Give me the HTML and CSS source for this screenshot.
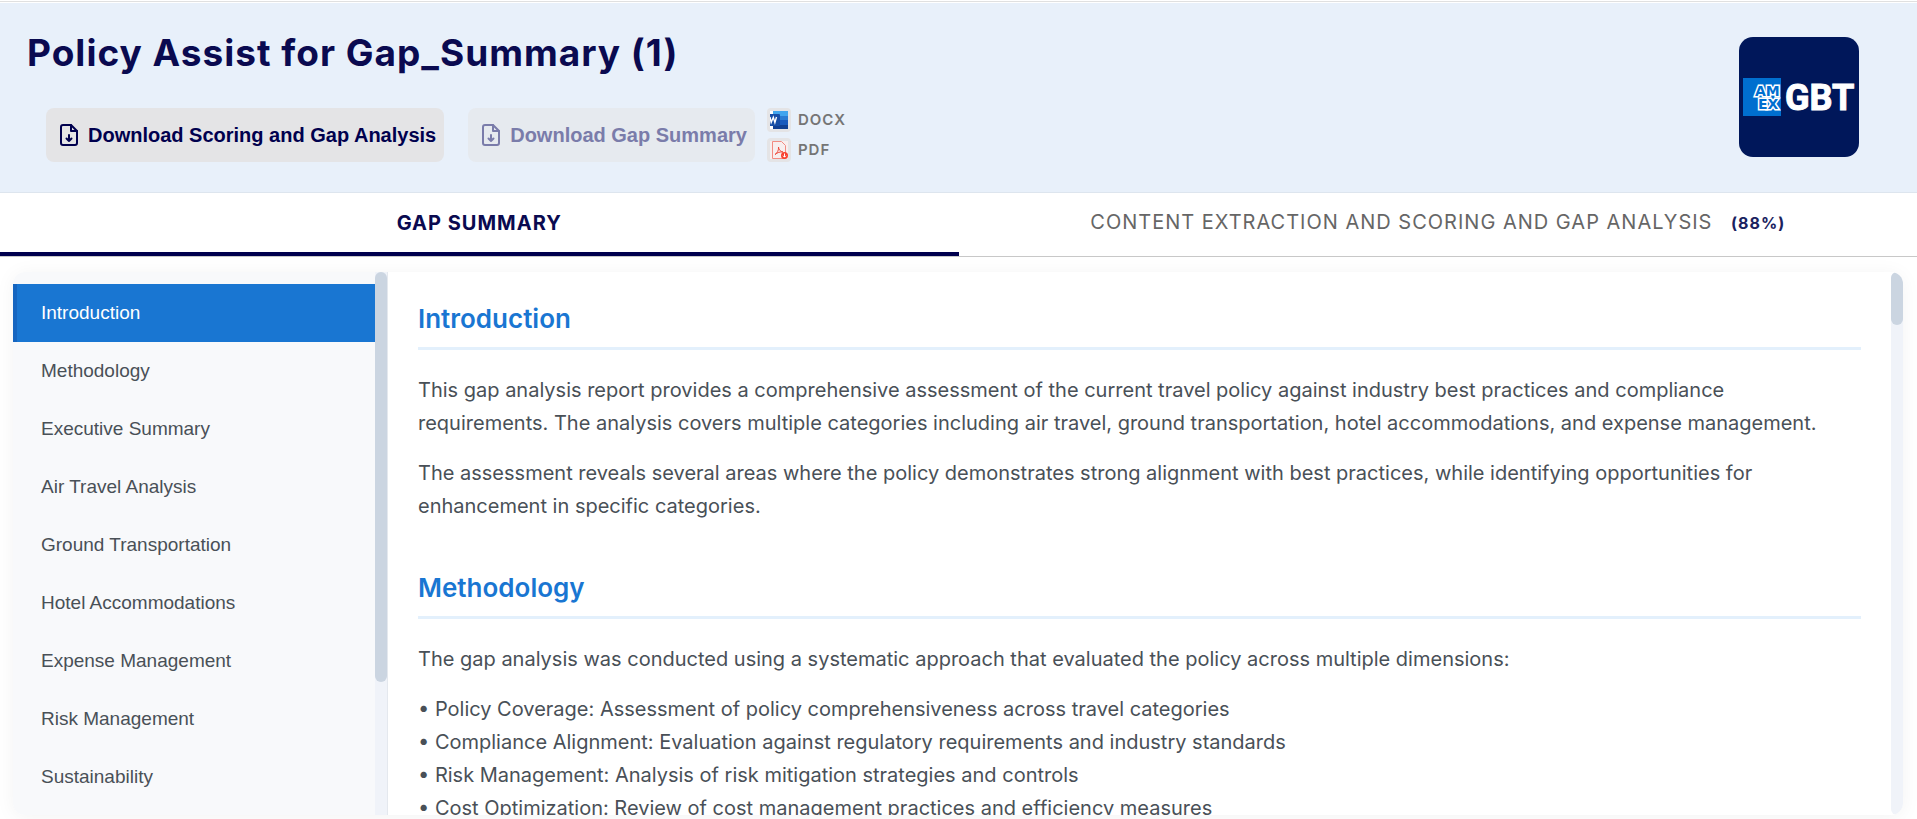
FILE: index.html
```
<!DOCTYPE html>
<html lang="en">
<head>
<meta charset="utf-8">
<meta name="viewport" content="width=device-width, initial-scale=1">
<title>Policy Assist</title>
<link rel="stylesheet" href="styles.css">
</head>
<body>
<header class="header">
  <div class="header-main">
    <h1 class="title">Policy Assist for Gap_Summary (1)</h1>
    <div class="actions">
      <button class="download" type="button">
        <svg class="file-icon" viewBox="0 0 18 22" fill="none" stroke="currentColor" stroke-width="2" stroke-linejoin="round" stroke-linecap="round"><path d="M11 1H3a2 2 0 0 0-2 2v16a2 2 0 0 0 2 2h12a2 2 0 0 0 2-2V7z"/><path d="M11 1v6h6M9 11v6M6.500 14.500 9 17l2.500-2.500"/></svg>
        Download Scoring and Gap Analysis
      </button>
      <button class="download" type="button" disabled>
        <svg class="file-icon" viewBox="0 0 18 22" fill="none" stroke="currentColor" stroke-width="2" stroke-linejoin="round" stroke-linecap="round"><path d="M11 1H3a2 2 0 0 0-2 2v16a2 2 0 0 0 2 2h12a2 2 0 0 0 2-2V7z"/><path d="M11 1v6h6M9 11v6M6.500 14.500 9 17l2.500-2.500"/></svg>
        Download Gap Summary
      </button>
      <div class="formats">
        <button class="format" type="button">
          <span class="format-icon"><svg viewBox="0 0 18 18"><path fill="#fff" d="M0 0h4v18H0z"/><path fill="#41a5ee" d="M3 0h15v5H3z"/><path fill="#2b7cd3" d="M3 5h15v4H3z"/><path fill="#185abd" d="M3 9h15v5H3z"/><path fill="#103f91" d="M3 14h15v4H3z"/><path fill="#174ea6" d="M0 3h9a1 1 0 0 1 1 1v10a1 1 0 0 1-1 1H0z"/><path fill="none" stroke="#fff" stroke-width="1.400" d="m0 6 1.200 5.500L3.300 6.300l1.600 5.200L6.500 6"/></svg></span>
          DOCX
        </button>
        <button class="format" type="button">
          <span class="format-icon"><svg viewBox="0 0 18 18" fill="none"><path fill="#f8eeee" d="M0 0h18v18H0z"/><path stroke="#f28b82" d="M2.500.500h9l4 4v13h-13z"/><path stroke="#ee4b3e" d="M8.500 6c.200 3 2 4.500 4.500 5-3-.300-5.500.500-8 2.500 2.500-1.500 3.800-4.500 3.500-7.500z"/><circle cx="14.500" cy="14.500" r="3.500" fill="#f9402f"/><path stroke="#fff" d="M14.500 12.500v3.500M13 14.700l1.500 1.500 1.500-1.500"/></svg></span>
          PDF
        </button>
      </div>
    </div>
  </div>
  <svg class="logo" viewBox="0 0 120 120" role="img" aria-label="Amex GBT">
    <defs><clipPath id="box"><path d="M4 41h38v38H4z"/></clipPath></defs>
    <path fill="#00175a" d="M0 0h120v120H0z"/>
    <path fill="#006fcf" d="M4 41h38v38H4z"/>
    <g clip-path="url(#box)" class="logo-amex">
      <text x="16" y="59">AM</text>
      <text x="19" y="72">EX</text>
    </g>
    <text class="logo-gbt" x="46" y="73">GBT</text>
  </svg>
</header>

<div class="tabs" role="tablist">
  <button class="tab tab-active" type="button" role="tab" aria-selected="true">GAP SUMMARY</button>
  <button class="tab" type="button" role="tab" aria-selected="false">CONTENT EXTRACTION AND SCORING AND GAP ANALYSIS <span class="score">(88%)</span></button>
</div>

<main class="panel">
  <nav class="sidebar">
    <a class="item item-active" href="#introduction">Introduction</a>
    <a class="item" href="#methodology">Methodology</a>
    <a class="item" href="#executive">Executive Summary</a>
    <a class="item" href="#air">Air Travel Analysis</a>
    <a class="item" href="#ground">Ground Transportation</a>
    <a class="item" href="#hotel">Hotel Accommodations</a>
    <a class="item" href="#expense">Expense Management</a>
    <a class="item" href="#risk">Risk Management</a>
    <a class="item" href="#sustainability">Sustainability</a>
  </nav>
  <div class="track track-nav"><div class="thumb thumb-nav"></div></div>
  <div class="content">
    <section class="section" id="introduction">
      <h2 class="heading">Introduction</h2>
      <p class="text">This gap analysis report provides a comprehensive assessment of the current travel policy against industry best practices and compliance requirements. The analysis covers multiple categories including air travel, ground transportation, hotel accommodations, and expense management.</p>
      <p class="text">The assessment reveals several areas where the policy demonstrates strong alignment with best practices, while identifying opportunities for enhancement in specific categories.</p>
    </section>
    <section class="section" id="methodology">
      <h2 class="heading">Methodology</h2>
      <p class="text">The gap analysis was conducted using a systematic approach that evaluated the policy across multiple dimensions:</p>
      <p class="text">• Policy Coverage: Assessment of policy comprehensiveness across travel categories<br>• Compliance Alignment: Evaluation against regulatory requirements and industry standards<br>• Risk Management: Analysis of risk mitigation strategies and controls<br>• Cost Optimization: Review of cost management practices and efficiency measures</p>
    </section>
  </div>
  <div class="track"><div class="thumb thumb-content"></div></div>
</main>
</body>
</html>
```
FILE: styles.css
```
* {
  box-sizing: border-box;
}

body {
  display: flex;
  flex-direction: column;
  height: 100vh;
  margin: 0;
  padding-top: 1px;
  overflow: hidden;
  background: #fff;
  font-family: Inter, "Liberation Sans", sans-serif;
}

button {
  border: 0;
  background: none;
  font: inherit;
}

.header {
  display: flex;
  flex: none;
  justify-content: space-between;
  align-items: flex-start;
  padding: 0 58px 30px 27px;
  border-top: 1px solid #e0e0e0;
  border-bottom: 1px solid #dde5ee;
  background: #e8f0fa;
  box-shadow: inset 0 1px #fff;
}

.title {
  margin: 28px 0 32px;
  color: #0a0a50;
  font-size: 37px;
  font-weight: 700;
  line-height: 46px;
  letter-spacing: 1px;
}

.actions {
  display: flex;
  padding-left: 19px;
}

.download {
  display: flex;
  align-items: center;
  gap: 10px;
  height: 54px;
  margin-right: 24px;
  padding: 0 8px 0 14px;
  border-radius: 8px;
  background: #e4e4e6;
  color: #00004e;
  font: 700 20px/24px "Liberation Sans", sans-serif;
}

.download:disabled {
  margin-right: 12px;
  background: #e6eaef;
  color: #7a7caa;
}

.file-icon {
  width: 18px;
  height: 22px;
}

.formats {
  display: flex;
  flex-direction: column;
  gap: 6px;
}

.format {
  display: flex;
  align-items: center;
  gap: 7px;
  padding: 0;
  color: #757575;
  font-size: 15px;
  font-weight: 600;
  line-height: 24px;
  letter-spacing: 1px;
}

.format-icon {
  width: 24px;
  height: 24px;
  padding: 3px;
  border-radius: 4px;
  background: #e4e4e6;
}

.format-icon svg {
  display: block;
}

.logo {
  width: 120px;
  height: 120px;
  margin-top: 35px;
  border-radius: 14px;
}

.logo-amex {
  fill: #006fcf;
  stroke: #fff;
  stroke-width: 3px;
  paint-order: stroke;
  font: 700 14px "DejaVu Sans", sans-serif;
}

.logo-gbt {
  fill: #fff;
  stroke: #fff;
  stroke-width: 1px;
  font: 700 36px Roboto, sans-serif;
}

.tabs {
  display: flex;
  flex: none;
  border-bottom: 1px solid #c8c8c8;
}

.tab {
  flex: 1;
  padding: 13px 0;
  border-bottom: 4px solid transparent;
  color: #666;
  font-size: 20px;
  line-height: 32px;
  letter-spacing: 1px;
}

.tab-active {
  border-color: #00004e;
  color: #0a0a50;
  font-weight: 700;
}

.score {
  margin-left: 12px;
  color: #1a2260;
  font-size: 16px;
  font-weight: 700;
}

.panel {
  display: flex;
  flex: 1;
  min-height: 0;
  margin: 15px 14px 4px 13px;
  border-radius: 12px;
  background: #fff;
  box-shadow: 0 2px 20px rgba(0, 0, 0, 0.05);
  overflow: hidden;
}

.sidebar {
  flex: none;
  width: 362px;
  padding: 12px 0;
  background: #f8f9fb;
}

.item {
  display: block;
  padding: 14px 24px;
  border-left: 4px solid transparent;
  color: #495057;
  font: 19px/30px "Liberation Sans", sans-serif;
  text-decoration: none;
}

.item-active {
  border-color: #1565c0;
  background: #1976d2;
  color: #fff;
}

.track {
  flex: none;
  width: 12px;
  border-radius: 6px;
  background: #f0f3f9;
}

.track-nav {
  width: 13px;
  border-right: 1px solid #e4e8ee;
  border-radius: 0;
}

.thumb {
  border-radius: 6px;
  background: #cbd5e1;
}

.thumb-nav {
  height: 410px;
}

.thumb-content {
  height: 53px;
}

.content {
  flex: 1;
  min-width: 0;
  padding: 30px;
  overflow: hidden;
}

.section {
  margin-bottom: 48px;
}

.heading {
  margin: 0 0 24px;
  padding-bottom: 12px;
  border-bottom: 3px solid #e3f0fc;
  color: #1976d2;
  font-size: 26px;
  font-weight: 600;
  line-height: 33px;
}

.text {
  margin: 0 0 17px;
  padding-right: 16px;
  color: #495057;
  font-size: 20px;
  line-height: 33px;
}
```
